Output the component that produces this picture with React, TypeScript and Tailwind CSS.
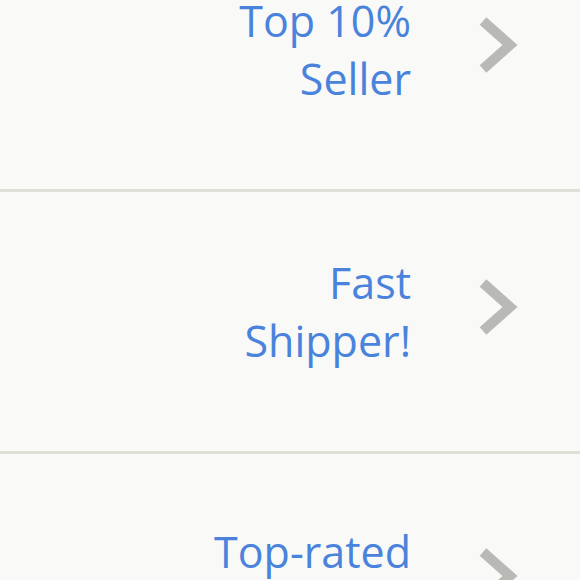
const rows = [
  { lines: ['Top 10%', 'Seller'], shift: 'pt-0' },
  { lines: ['Fast', 'Shipper!'], shift: 'pt-0' },
  { lines: ['Top-rated', 'Seller'], shift: 'pt-[14px]' },
]

function Chevron() {
  return (
    <svg width="44" height="56" viewBox="0 0 44 56" className="mb-[10px] shrink-0">
      <polyline
        points="6,4 33,28 6,52"
        fill="none"
        stroke="#b9b9b5"
        strokeWidth="10"
        strokeLinejoin="miter"
        strokeLinecap="butt"
      />
    </svg>
  )
}

export default function App() {
  return (
    <div className="h-[580px] w-[580px] overflow-hidden bg-[#f9f9f7] font-['Open_Sans',sans-serif]">
      <div className="-mt-[70px]">
        {rows.map((row, i) => (
          <div
            key={i}
            className={`flex h-[262px] items-center border-b-[3px] border-[#dedfd6] pb-[20px] ${row.shift}`}
          >
            <div className="w-[411px] text-right text-[43px] leading-[58px] text-[#4a83dc]">
              {row.lines.map((l) => (
                <div key={l}>{l}</div>
              ))}
            </div>
            <div className="ml-[66px]">
              <Chevron />
            </div>
          </div>
        ))}
      </div>
    </div>
  )
}
